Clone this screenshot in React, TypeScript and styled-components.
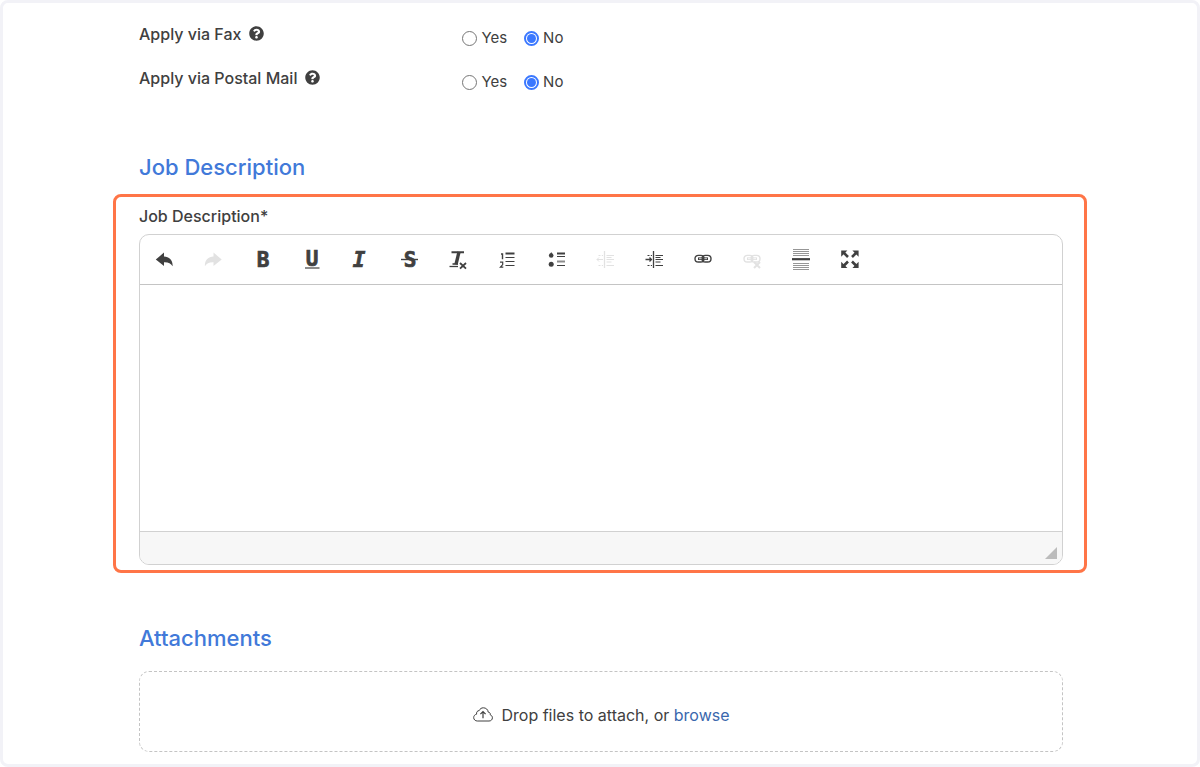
import React from "react";
import styled, { createGlobalStyle } from "styled-components";
import { FaQuestionCircle } from "react-icons/fa";

const GlobalStyle = createGlobalStyle`
  *, *::before, *::after { box-sizing: border-box; }
  body {
    margin: 0;
    background: #fff;
    color: #404040;
    font-family: Inter, "Liberation Sans", sans-serif;
    font-size: 16px;
    line-height: 20px;
  }
`;

const Page = styled.main`
  border: 3px solid #f2f2f7;
  border-radius: 8px;
  padding: 13px 110px 12px;
`;

const Section = styled.section<{ $top?: number }>`
  margin: ${(p) => p.$top ?? 0}px 24px 0 26px;
`;

const Row = styled.div`
  display: grid;
  grid-template-columns: 35% 1fr;
  align-items: center;
  height: 44px;
`;

const RowLabel = styled.span`
  display: flex;
  align-items: center;
  gap: 8px;
  padding-bottom: 8px;
  font-weight: 500;
`;

const HelpButton = styled.button`
  display: flex;
  padding: 0 0 2px;
  border: 0;
  background: none;
  color: #404040;
  font-size: 15px;
`;

const Choices = styled.div`
  display: flex;
  gap: 17px;
  font-size: 15px;
`;

const Choice = styled.label`
  display: flex;
  align-items: center;
  gap: 4px;
`;

const Radio = styled.input`
  appearance: none;
  width: 15px;
  height: 15px;
  margin: 0;
  border: 1px solid #767676;
  border-radius: 50%;
  background: #fff;

  &:checked {
    border: 2px solid #3b78ff;
    background: #3b78ff;
    background-clip: content-box;
    padding: 1px;
  }
`;

const Title = styled.h2`
  margin: 0;
  color: #4179d9;
  font-size: 22px;
  line-height: 30px;
  font-weight: 500;
`;

const Highlight = styled.div`
  margin-top: 12px;
  padding: 9px 21px 5px 23px;
  border: 3px solid #ff7547;
  border-radius: 8px;
`;

const FieldLabel = styled.label`
  display: block;
  margin-bottom: 8px;
  font-weight: 500;
`;

const Editor = styled.div`
  display: flex;
  flex-direction: column;
  border: 1px solid #d1d1d1;
  border-radius: 10px;
  overflow: hidden;
`;

const Toolbar = styled.div`
  display: flex;
  border-bottom: 1px solid #c4c4c4;
`;

const Tool = styled.button`
  display: flex;
  align-items: center;
  justify-content: center;
  width: 49px;
  height: 49px;
  padding: 0;
  border: 0;
  background: none;
  color: #404040;

  &:disabled {
    color: #e2e2e2;
  }
`;

const TextArea = styled.textarea`
  display: block;
  height: 246px;
  padding: 16px;
  border: 0;
  outline: 0;
  resize: none;
  font: inherit;
  color: inherit;
`;

const EditorFooter = styled.div`
  display: flex;
  justify-content: flex-end;
  align-items: flex-end;
  height: 33px;
  padding: 5px;
  border-top: 1px solid #d1d1d1;
  background: #f7f7f7;
`;

const Grip = styled.span`
  width: 12px;
  height: 12px;
  background: #bcbcbc;
  clip-path: polygon(100% 0, 100% 100%, 0 100%);
`;

const DropZone = styled.div`
  display: flex;
  align-items: center;
  justify-content: center;
  gap: 9px;
  height: 81px;
  margin-top: 18px;
  padding-top: 6px;
  border: 1px dashed #c4c4c4;
  border-radius: 10px;

  p { margin: 0; }
`;

const BrowseLink = styled.a`
  color: #3a67ad;
  text-decoration: none;
`;

const IconSvg = styled.svg`
  display: block;
  overflow: visible;
  fill: none;
  stroke: currentColor;
`;

const Letter = styled.text`
  fill: currentColor;
  stroke: currentColor;
  stroke-width: 0.7px;
  font-family: "DejaVu Sans Mono", monospace;
  font-weight: 700;
  font-size: 21px;
  text-anchor: middle;
`;

const turnArrow =
  "M1.8 10.4 10 3.6V7.4C15.4 7.7 19 11 18.6 17.2 16.8 14.2 14.2 13 10 13.2V17Z";
const chain = (
  <>
    <rect x="2" y="6.4" width="9" height="6.6" rx="3.3" />
    <rect x="9" y="6.4" width="9" height="6.6" rx="3.3" />
    <path d="M5 9.7H15" strokeWidth="2.6" />
    <path d="M6 9.7H8.6M11.4 9.7H14" stroke="#fff" strokeWidth="0.8" />
  </>
);
const indentLines = (
  <>
    <path d="M9.5 2V19" strokeWidth="1.3" />
    <path d="M3.5 6.5H5.5M6.8 6.5H8M3.5 16.5H5.5M6.8 16.5H8" />
    <path d="M11.5 6.5H19M11.5 8.5H16.5M11.5 10.5H19M11.5 13H16.5M11.5 16.5H19" strokeWidth="1.2" />
  </>
);

type ToolItem = { name: string; icon: React.ReactNode; disabled?: boolean };

const tools: ToolItem[] = [
  { name: "Undo", icon: <path d={turnArrow} fill="currentColor" stroke="none" /> },
  {
    name: "Redo",
    disabled: true,
    icon: <path d={turnArrow} fill="currentColor" stroke="none" transform="translate(20.5 0) scale(-1 1)" />,
  },
  { name: "Bold", icon: <Letter x="11" y="18">B</Letter> },
  {
    name: "Underline",
    icon: (
      <>
        <Letter x="11" y="17">U</Letter>
        <path d="M4 19H18.5" strokeWidth="1.2" />
      </>
    ),
  },
  { name: "Italic", icon: <Letter x="9" y="18" fontStyle="italic">I</Letter> },
  {
    name: "Strikethrough",
    icon: (
      <>
        <Letter x="11" y="18">S</Letter>
        <path d="M2 10.5H19" strokeWidth="1.4" />
      </>
    ),
  },
  {
    name: "Remove format",
    icon: (
      <>
        <path d="M3.5 3.2H16" strokeWidth="2" />
        <path d="M11 3 8 15.4" strokeWidth="3.4" />
        <path d="M4.5 15H10" strokeWidth="1.6" />
        <path d="M1.5 17.5H10" strokeWidth="1.3" />
        <path d="M12 14 18 19.6M18 14 12 19.6" strokeWidth="1.8" />
      </>
    ),
  },
  {
    name: "Numbered list",
    icon: (
      <>
        <path d="M4 5H5.5V10.2" strokeWidth="1.4" />
        <path d="M3 13.2H5.7V15.6L3.4 18.2H6.3" strokeWidth="1.2" />
        <path d="M8.5 4.5H17.5" strokeWidth="2" />
        <path d="M8.5 8.5H17.5M8.5 12.5H17.5M8.5 16.5H17.5" />
      </>
    ),
  },
  {
    name: "Bulleted list",
    icon: (
      <>
        <g fill="currentColor" stroke="none">
          <circle cx="5.2" cy="6.5" r="2.3" />
          <path d="M5.2 3 6.8 6H3.6Z" />
          <circle cx="5.2" cy="15.2" r="2.5" />
        </g>
        <path d="M11 4.5H19" strokeWidth="2" />
        <path d="M11 7.5H19M11 16.5H19" />
        <path d="M11 12.5H19" strokeWidth="2" opacity="0.6" />
      </>
    ),
  },
  {
    name: "Decrease indent",
    disabled: true,
    icon: (
      <>
        {indentLines}
        <path d="M8 10.5H2M4 8.5 2 10.5 4 12.5" />
      </>
    ),
  },
  {
    name: "Increase indent",
    icon: (
      <>
        {indentLines}
        <path d="M1.5 10.5H7.5M5.5 8.5 7.5 10.5 5.5 12.5" strokeWidth="1.3" />
      </>
    ),
  },
  { name: "Link", icon: <g strokeWidth="1.4">{chain}</g> },
  {
    name: "Unlink",
    disabled: true,
    icon: (
      <>
        <g strokeWidth="1.4">{chain}</g>
        <path d="M12 13 18 19M18 13 12 19" strokeWidth="2" />
      </>
    ),
  },
  {
    name: "Horizontal line",
    icon: (
      <>
        <path d="M2 .5H18M2 2.5H18M2 4.5H18M2 6.5H18M2 14.5H18M2 16.5H18M2 18.5H18M2 20.5H18" opacity="0.55" />
        <path d="M1 10.2H19" strokeWidth="2.2" />
      </>
    ),
  },
  {
    name: "Maximize",
    icon: (
      <>
        <path d="M3 3 8 8M17 3 12 8M3 17.5 8 12.5M17 17.5 12 12.5" strokeWidth="2.6" />
        <path
          d="M1.2 1.5H7.4L1.2 7.7ZM18.6 1.5H12.4L18.6 7.7ZM1.2 19H7.4L1.2 12.8ZM18.6 19H12.4L18.6 12.8Z"
          fill="currentColor"
          stroke="none"
        />
      </>
    ),
  },
];

function YesNoRow({ label, name }: { label: string; name: string }) {
  return (
    <Row role="radiogroup" aria-labelledby={`${name}-label`}>
      <RowLabel>
        <span id={`${name}-label`}>{label}</span>
        <HelpButton type="button" aria-label={`Help: ${label}`}>
          <FaQuestionCircle />
        </HelpButton>
      </RowLabel>
      <Choices>
        <Choice>
          <Radio type="radio" name={name} value="yes" />
          Yes
        </Choice>
        <Choice>
          <Radio type="radio" name={name} value="no" defaultChecked />
          No
        </Choice>
      </Choices>
    </Row>
  );
}

export default function App() {
  return (
    <>
      <GlobalStyle />
      <Page>
        <Section>
          <YesNoRow label="Apply via Fax" name="fax" />
          <YesNoRow label="Apply via Postal Mail" name="postal" />
        </Section>
        <Section $top={48}>
          <Title>Job Description</Title>
        </Section>
        <Highlight>
          <FieldLabel htmlFor="description">Job Description*</FieldLabel>
          <Editor>
            <Toolbar role="toolbar" aria-label="Formatting">
              {tools.map((tool) => (
                <Tool key={tool.name} type="button" aria-label={tool.name} disabled={tool.disabled}>
                  <IconSvg width="21" height="21" viewBox="0 0 21 21" aria-hidden="true">
                    {tool.icon}
                  </IconSvg>
                </Tool>
              ))}
            </Toolbar>
            <TextArea id="description" />
            <EditorFooter>
              <Grip />
            </EditorFooter>
          </Editor>
        </Highlight>
        <Section $top={50}>
          <Title>Attachments</Title>
          <DropZone>
            <IconSvg width="20" height="15" viewBox="0 0 20 15" aria-hidden="true">
              <path d="M4.3 14C2.2 14 .7 12.5.7 10.6.7 8.8 1.9 7.5 3.6 7.2 3.2 5.2 4.4 3.6 6.2 3.6 7 1.7 8.5.8 10.3.8 13 .8 15 2.6 15.2 5.1 17 5.3 17.6 6.6 17.2 7.8 18.6 8.3 19.4 9.4 19.4 10.8 19.4 12.7 18 14 16 14Z" />
              <path d="M10 11.2V4.8M7.4 7.2 10 4.6 12.6 7.2" strokeWidth="1.2" />
            </IconSvg>
            <p>
              Drop files to attach, or <BrowseLink href="#browse">browse</BrowseLink>
            </p>
          </DropZone>
        </Section>
      </Page>
    </>
  );
}
